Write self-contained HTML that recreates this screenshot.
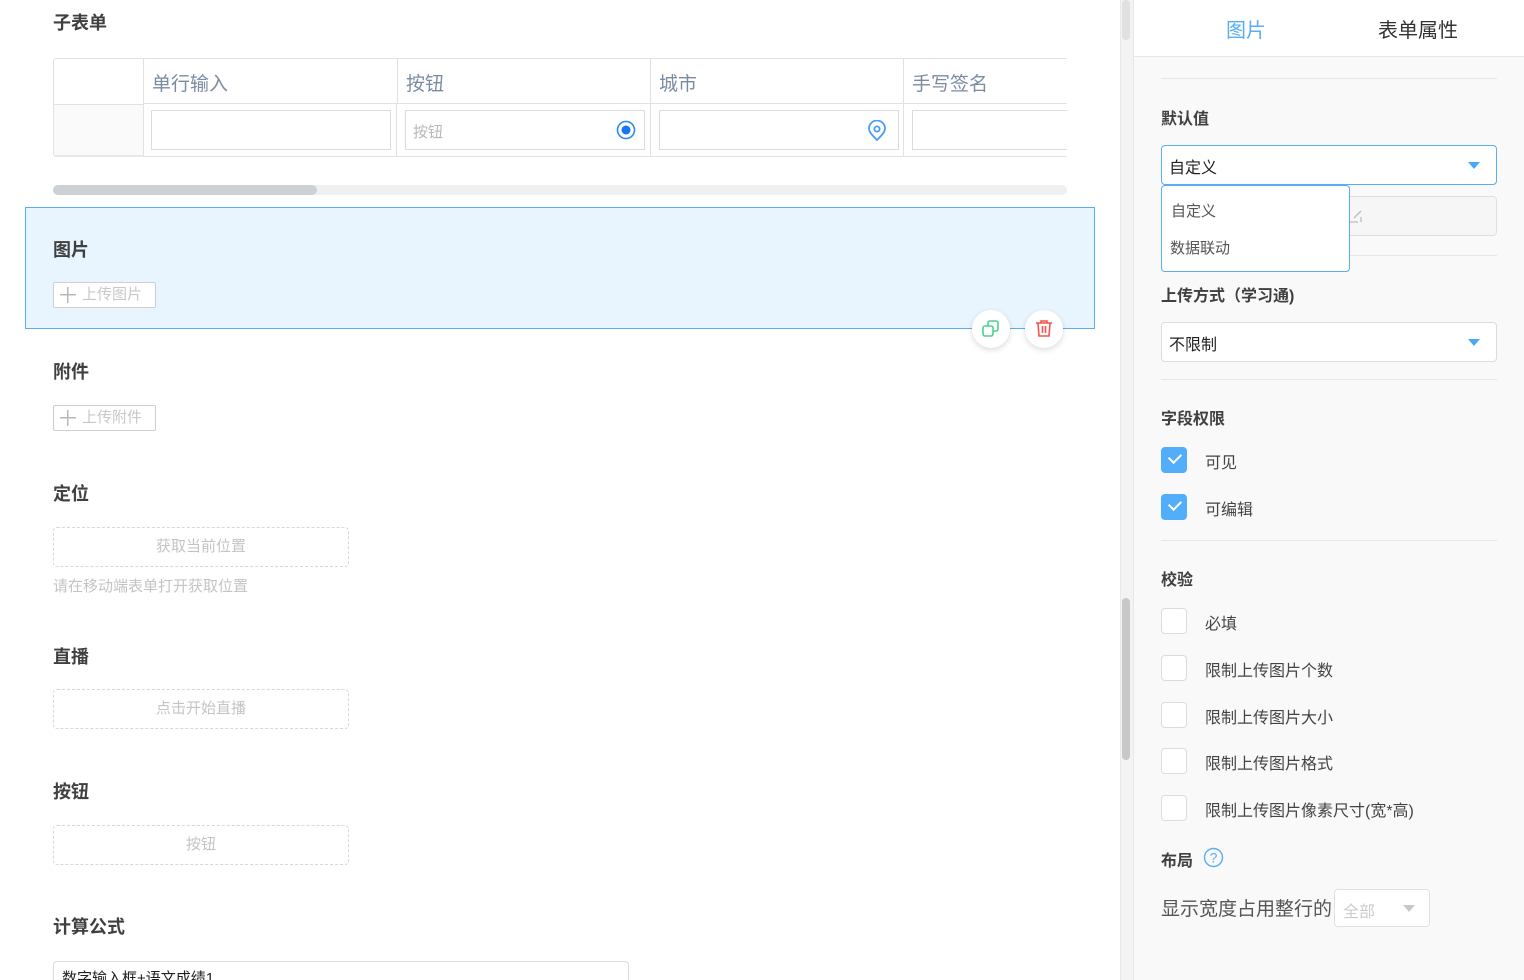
<!DOCTYPE html>
<html><head><meta charset="utf-8"><style>
*{margin:0;padding:0;box-sizing:border-box}
html,body{width:1524px;height:980px;overflow:hidden}
body{background:#fff;font-family:"Liberation Sans","Noto Sans CJK SC",sans-serif;position:relative;color:#333}
.a{position:absolute}
.t{font-size:18px;font-weight:bold;color:#404040}
.th{position:absolute;top:58px;height:46px;border:1px solid #e2e2e2;border-left:none;font-size:19px;color:#7b8ba2;padding:10px 0 0 8px}
.td{position:absolute;top:104px;height:53px;border-bottom:1px solid #e2e2e2;border-right:1px solid #e2e2e2}
.in{position:absolute;top:6px;left:8px;height:40px;border:1px solid #dcdcdc;background:#fff}
.dash{position:absolute;left:53px;width:296px;height:40px;border:1px dashed #d8d8d8;border-radius:4px;text-align:center;line-height:38px;color:#c4c4c4;font-size:15px}
.up{position:absolute;left:53px;width:103px;height:26px;border:1px solid #cfcfcf;border-radius:2px;background:#fff;color:#c8c8c8;font-size:15px;line-height:24px;padding-left:28px}
.up:before{content:"";position:absolute;left:6px;top:4px;width:16px;height:16px;background:linear-gradient(#b8b8b8,#b8b8b8) center/16px 1.5px no-repeat,linear-gradient(#b8b8b8,#b8b8b8) center/1.5px 16px no-repeat}
.rl{position:absolute;left:1161px;font-size:16px;font-weight:bold;color:#404040}
.sel{position:absolute;left:1161px;width:336px;height:40px;border:1px solid #dcdcdc;border-radius:4px;background:#fff;font-size:16px;padding:8px 0 0 7px;color:#222}
.sel:after{content:"";position:absolute;right:16px;top:16px;border:6px solid transparent;border-top:7px solid #4aa8f5}
.hr{position:absolute;left:1161px;width:336px;height:1px;background:#e6e6e6}
.cb{position:absolute;left:1161px;width:26px;height:26px;border:1px solid #dcdcdc;border-radius:4px;background:#fff}
.cb.on{background:#52adfa;border-color:#52adfa}
.cb.on:after{content:"";position:absolute;left:7px;top:5px;width:10px;height:6px;border-left:2px solid #fff;border-bottom:2px solid #fff;transform:rotate(-45deg)}
.cl{position:absolute;left:1205px;font-size:16px;color:#444}
</style></head><body>
<div class="a t" style="left:53px;top:9px">子表单</div>
<div class="a" style="left:53px;top:58px;width:91px;height:99px;border:1px solid #e2e2e2;border-bottom:3px solid #e8e8e8;border-radius:3px 0 0 3px"></div>
<div class="a" style="left:54px;top:104px;width:89px;height:51px;background:#fafafa;border-top:1px solid #e2e2e2"></div>
<div class="th" style="left:143px;width:255px;border-left:1px solid #e2e2e2">单行输入</div>
<div class="th" style="left:397px;width:254px;border-left:1px solid #e2e2e2">按钮</div>
<div class="th" style="left:651px;width:253px">城市</div>
<div class="th" style="left:904px;width:163px;border-right:none">手写签名</div>
<div class="td" style="left:143px;width:254px"><div class="in" style="width:240px"></div></div>
<div class="td" style="left:397px;width:254px"><div class="in" style="width:240px;font-size:15px;color:#b8b8b8;padding:10px 0 0 7px">按钮<svg class="a" style="right:8px;top:9px" width="20" height="20"><circle cx="10" cy="10" r="8.5" fill="none" stroke="#2a8af5" stroke-width="1.6"/><circle cx="10" cy="10" r="4.5" fill="#1677ee"/></svg></div></div>
<div class="td" style="left:651px;width:253px"><div class="in" style="width:240px"><svg class="a" style="right:11px;top:9px" width="20" height="22"><path d="M10 20C5 15 2 12 2 8.5A8 8 0 0 1 18 8.5C18 12 15 15 10 20Z" fill="none" stroke="#4a9cf5" stroke-width="1.8"/><circle cx="10" cy="9" r="2.6" fill="none" stroke="#4a9cf5" stroke-width="1.8"/></svg></div></div>
<div class="td" style="left:904px;width:163px;border-right:none"><div class="in" style="width:155px;border-right:none"></div></div>
<div class="a" style="left:53px;top:185px;width:1014px;height:10px;border-radius:5px;background:#f0f0f0"></div>
<div class="a" style="left:53px;top:185px;width:264px;height:10px;border-radius:5px;background:#cdd0d4"></div>

<div class="a" style="left:25px;top:207px;width:1070px;height:122px;background:#e8f5fe;border:1px solid #5aacf4"></div>
<div class="a t" style="left:53px;top:236px">图片</div>
<div class="up" style="top:282px">上传图片</div>
<div class="a" style="left:972px;top:310px;width:38px;height:38px;border-radius:50%;background:#fff;box-shadow:0 2px 6px rgba(0,0,0,.15)"><svg class="a" style="left:10px;top:10px" width="18" height="18"><rect x="1" y="6" width="10" height="10" rx="2" fill="none" stroke="#4cd092" stroke-width="1.6"/><path d="M6 6V3a2 2 0 0 1 2-2h6a2 2 0 0 1 2 2v6a2 2 0 0 1-2 2h-3" fill="none" stroke="#4cd092" stroke-width="1.6"/></svg></div>
<div class="a" style="left:1025px;top:310px;width:38px;height:38px;border-radius:50%;background:#fff;box-shadow:0 2px 6px rgba(0,0,0,.15)"><svg class="a" style="left:10px;top:9px" width="18" height="19"><path d="M1 4h16M6 4V2h6v2M3 4l1 13h10l1-13M7.5 7v7M10.5 7v7" fill="none" stroke="#f4534f" stroke-width="1.6"/></svg></div>

<div class="a t" style="left:53px;top:358px">附件</div>
<div class="up" style="top:405px">上传附件</div>
<div class="a t" style="left:53px;top:480px">定位</div>
<div class="dash" style="top:527px">获取当前位置</div>
<div class="a" style="left:53px;top:575px;font-size:15px;color:#c4c4c4">请在移动端表单打开获取位置</div>
<div class="a t" style="left:53px;top:643px">直播</div>
<div class="dash" style="top:689px">点击开始直播</div>
<div class="a t" style="left:53px;top:778px">按钮</div>
<div class="dash" style="top:825px">按钮</div>
<div class="a t" style="left:53px;top:913px">计算公式</div>
<div class="a" style="left:53px;top:961px;width:576px;height:19px;border:1px solid #dcdcdc;border-bottom:none;border-radius:4px 4px 0 0;font-size:15px;padding:8px 8px 0;color:#222;overflow:hidden;line-height:18px">数字输入框+语文成绩1</div>

<div class="a" style="left:1120px;top:0;width:13px;height:980px;background:#f3f3f3;border-left:1px solid #e8e8e8"></div>
<div class="a" style="left:1122px;top:598px;width:8px;height:162px;border-radius:4px;background:#c8c8c8"></div>
<div class="a" style="left:1122px;top:0;width:8px;height:40px;border-radius:4px;background:#e0e0e0"></div>

<div class="a" style="left:1133px;top:0;width:391px;height:980px;background:#f9f9f9;border-left:1px solid #e8e8e8"></div>
<div class="a" style="left:1134px;top:0;width:390px;height:57px;background:#fff;border-bottom:1px solid #e6e6e6"></div>
<div class="a" style="left:1226px;top:14px;font-size:20px;color:#5aaef5">图片</div>
<div class="a" style="left:1378px;top:14px;font-size:20px;color:#333">表单属性</div>
<div class="hr" style="top:78px"></div>
<div class="rl" style="top:105px">默认值</div>
<div class="a" style="left:1161px;top:196px;width:336px;height:40px;border:1px solid #e0e0e0;border-radius:4px;background:#f6f6f6"><svg class="a" style="left:186px;top:12px" width="14" height="14"><path d="M1 4v9h9M6 9l7-7M13 8v5" fill="none" stroke="#bbb" stroke-width="1.3"/></svg></div>
<div class="sel" style="top:145px;border-color:#5aacf4">自定义</div>
<div class="hr" style="top:255px"></div>
<div class="a" style="left:1161px;top:185px;width:189px;height:87px;border:1px solid #5aacf4;border-radius:4px;background:#fff;font-size:15px;color:#555"><div class="a" style="left:9px;top:14px">自定义</div><div class="a" style="left:8px;top:51px">数据联动</div></div>
<div class="rl" style="top:282px">上传方式（学习通)</div>
<div class="sel" style="top:322px">不限制</div>
<div class="hr" style="top:379px"></div>
<div class="rl" style="top:405px">字段权限</div>
<div class="cb on" style="top:447px"></div><div class="cl" style="top:449px">可见</div>
<div class="cb on" style="top:494px"></div><div class="cl" style="top:496px">可编辑</div>
<div class="hr" style="top:540px"></div>
<div class="rl" style="top:566px">校验</div>
<div class="cb" style="top:608px"></div><div class="cl" style="top:610px">必填</div>
<div class="cb" style="top:655px"></div><div class="cl" style="top:657px">限制上传图片个数</div>
<div class="cb" style="top:702px"></div><div class="cl" style="top:704px">限制上传图片大小</div>
<div class="cb" style="top:748px"></div><div class="cl" style="top:750px">限制上传图片格式</div>
<div class="cb" style="top:795px"></div><div class="cl" style="top:797px">限制上传图片像素尺寸(宽*高)</div>
<div class="rl" style="top:847px">布局</div>
<svg class="a" style="left:1203px;top:847px" width="21" height="21"><circle cx="10.5" cy="10.5" r="9" fill="none" stroke="#5aaef5" stroke-width="1.4"/><text x="10.5" y="15.5" text-anchor="middle" font-size="14" fill="#5aaef5" font-family="Liberation Sans">?</text></svg>
<div class="a" style="left:1161px;top:894px;font-size:19px;color:#555">显示宽度占用整行的</div>
<div class="a" style="left:1334px;top:889px;width:96px;height:38px;border:1px solid #e0e0e0;border-radius:4px;background:#fff;font-size:16px;color:#ccc;padding:8px 0 0 8px">全部<span class="a" style="right:14px;top:15px;border:6px solid transparent;border-top:7px solid #c8c8c8"></span></div>
</body></html>
